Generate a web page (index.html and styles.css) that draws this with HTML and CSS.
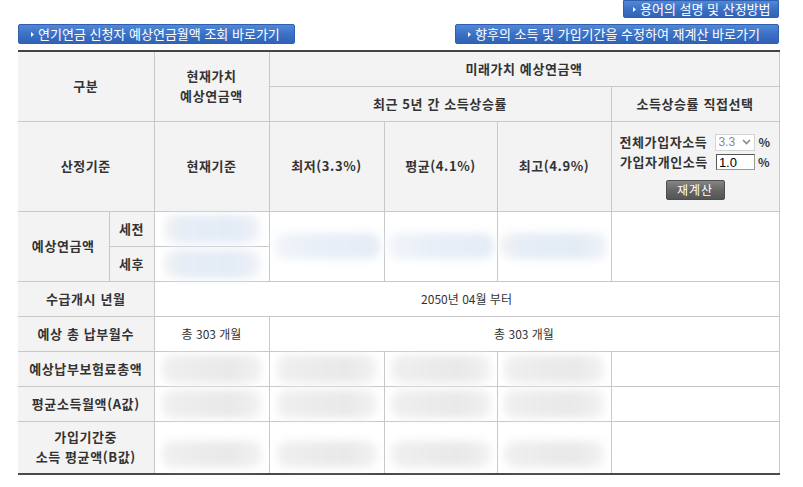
FILE: index.html
```html
<!DOCTYPE html>
<html lang="ko">
<head>
<meta charset="utf-8">
<title>예상연금액 조회</title>
<link rel="stylesheet" href="styles.css">
</head>
<body>
<div class="page">
  <div class="top-row">
    <a class="btn btn-terms" href="#"><svg class="arrow" width="3" height="5" viewBox="0 0 3 5"><path d="M0 0L3 2.5L0 5Z" fill="#fff"/></svg>용어의 설명 및 산정방법</a>
  </div>
  <div class="btn-row">
    <a class="btn btn-left" href="#"><svg class="arrow" width="3" height="5" viewBox="0 0 3 5"><path d="M0 0L3 2.5L0 5Z" fill="#fff"/></svg>연기연금 신청자 예상연금월액 조회 바로가기</a>
    <a class="btn btn-right" href="#"><svg class="arrow" width="3" height="5" viewBox="0 0 3 5"><path d="M0 0L3 2.5L0 5Z" fill="#fff"/></svg>향후의 소득 및 가입기간을 수정하여 재계산 바로가기</a>
  </div>
  <table class="calc">
    <colgroup>
      <col class="c1a"><col class="c1b"><col class="c2"><col class="c3"><col class="c4"><col class="c5"><col class="c6">
    </colgroup>
    <tr class="r-h1">
      <th colspan="2" rowspan="2">구분</th>
      <th rowspan="2">현재가치<br>예상연금액</th>
      <th colspan="4">미래가치 예상연금액</th>
    </tr>
    <tr class="r-h2">
      <th colspan="3">최근 5년 간 소득상승률</th>
      <th>소득상승률 직접선택</th>
    </tr>
    <tr class="r-h3">
      <th colspan="2">산정기준</th>
      <th>현재기준</th>
      <th>최저(3.3%)</th>
      <th>평균(4.1%)</th>
      <th>최고(4.9%)</th>
      <th class="ctrl">
        <div class="ctrl-line">전체가입자소득<span class="select"><span class="sel-val">3.3</span><svg width="9" height="6" viewBox="0 0 9 6"><path d="M1 1L4.5 4.5L8 1" stroke="#8a8a8a" stroke-width="1.6" fill="none"/></svg></span><span class="pct">%</span></div>
        <div class="ctrl-line">가입자개인소득<input class="rate" type="text" value="1.0"><span class="pct">%</span></div>
        <div class="ctrl-line"><button class="recalc" type="button">재계산</button></div>
      </th>
    </tr>
    <tr class="r-std">
      <th rowspan="2">예상연금액</th>
      <th>세전</th>
      <td><span class="blob blue b-small"></span></td>
      <td rowspan="2"><span class="blob blue2 b-wide"></span></td>
      <td rowspan="2"><span class="blob blue2 b-wide"></span></td>
      <td rowspan="2"><span class="blob blue b-wide"></span></td>
      <td rowspan="2"></td>
    </tr>
    <tr class="r-std">
      <th>세후</th>
      <td><span class="blob blue b-small"></span></td>
    </tr>
    <tr class="r-std">
      <th colspan="2">수급개시 년월</th>
      <td colspan="5" class="txt">2050년 04월 부터</td>
      <td></td>
    </tr>
    <tr class="r-std">
      <th colspan="2">예상 총 납부월수</th>
      <td class="txt">총 303 개월</td>
      <td colspan="4" class="txt">총 303 개월</td>
      <td></td>
    </tr>
    <tr class="r-std">
      <th colspan="2">예상납부보험료총액</th>
      <td><span class="blob gray b-gray"></span></td>
      <td><span class="blob gray b-gray"></span></td>
      <td><span class="blob gray b-gray"></span></td>
      <td><span class="blob gray b-gray"></span></td>
      <td></td>
    </tr>
    <tr class="r-std">
      <th colspan="2">평균소득월액(A값)</th>
      <td><span class="blob gray b-gray"></span></td>
      <td><span class="blob gray b-gray"></span></td>
      <td><span class="blob gray b-gray"></span></td>
      <td><span class="blob gray b-gray"></span></td>
      <td></td>
    </tr>
    <tr class="r-last">
      <th colspan="2">가입기간중<br>소득 평균액(B값)</th>
      <td><span class="blob gray b-gray low"></span></td>
      <td><span class="blob gray b-gray low"></span></td>
      <td><span class="blob gray b-gray low"></span></td>
      <td><span class="blob gray b-gray low"></span></td>
      <td></td>
    </tr>
  </table>
</div>
</body>
</html>
```

FILE: styles.css
```css
* { box-sizing: border-box; }
html, body {
  margin: 0;
  padding: 0;
  background: #fff;
}
body {
  font-family: "Noto Sans CJK KR", "Noto Sans", sans-serif;
  color: #333;
  font-size: 12px;
}
.page {
  width: 761px;
  margin-left: 18px;
}
.top-row {
  display: flex;
  justify-content: flex-end;
  height: 18px;
}
.btn-row {
  display: flex;
  justify-content: space-between;
  margin-top: 6px;
  height: 20px;
}
.btn {
  display: flex;
  align-items: center;
  height: 20px;
  border: 1px solid #2f5fae;
  border-radius: 2px;
  background: linear-gradient(#5088d6, #3a6fc4 55%, #3163b7);
  color: #fff;
  font-size: 13px;
  line-height: 18px;
  text-decoration: none;
  white-space: nowrap;
}
.btn .arrow {
  flex: none;
  margin-right: 4px;
}
.btn-terms {
  width: 156px;
  height: 18px;
  padding-left: 9px;
  border-top-left-radius: 0;
  border-top-right-radius: 0;
}
.btn-left {
  width: 277px;
  padding-left: 12px;
}
.btn-right {
  width: 324px;
  padding-left: 12px;
}

.calc {
  width: 761px;
  table-layout: fixed;
  border-collapse: collapse;
  margin-top: 6px;
  border-top: 2px solid #444;
  border-bottom: 2px solid #4a4a4a;
  border-left: hidden;
  border-right: hidden;
}
.c1a { width: 91px; }
.c1b { width: 45px; }
.c2 { width: 115px; }
.c3 { width: 115px; }
.c4 { width: 113px; }
.c5 { width: 114px; }
.c6 { width: 168px; }

.calc th, .calc td {
  border: 1px solid #c8c8c8;
  padding: 0;
  text-align: center;
  vertical-align: middle;
}
.calc th {
  background: #f3f3f3;
  font-size: 13px;
  font-weight: bold;
  color: #333;
  line-height: 20px;
  letter-spacing: 0.6px;
}
.calc td {
  background: #fff;
  font-size: 12px;
  color: #333;
}
.r-h1 { height: 35px; }
.r-h2 { height: 35px; }
.r-h3 { height: 90px; }
.r-std { height: 35px; }
.r-last { height: 53px; }

.ctrl-line {
  display: flex;
  align-items: center;
  justify-content: center;
  height: 20px;
  white-space: nowrap;
  letter-spacing: 0.6px;
}
.ctrl-line:last-child {
  margin-top: 8px;
}
.select {
  display: inline-flex;
  align-items: center;
  justify-content: space-between;
  width: 40px;
  height: 17px;
  margin-left: 8px;
  padding: 0 3px 0 2px;
  border: 1px solid #d3d3d3;
  background: #fff;
  color: #8a8a8a;
  font-family: "Liberation Sans", sans-serif;
  font-size: 12px;
  font-weight: normal;
  letter-spacing: 0;
}
.pct {
  margin-left: 3px;
  font-size: 12px;
}
.rate {
  width: 39px;
  height: 16px;
  margin: 0 0 0 8px;
  padding: 0 2px;
  border: 1px solid #555;
  border-right-color: #999;
  border-bottom-color: #999;
  font-family: "Liberation Sans", sans-serif;
  font-size: 13px;
  color: #000;
  outline: none;
  letter-spacing: 0;
}
.recalc {
  width: 59px;
  height: 20px;
  padding: 0;
  border: 1px solid #4e4e4e;
  border-radius: 2px;
  background: linear-gradient(#858585, #666 50%, #555);
  color: #fff;
  font-family: "Noto Sans CJK KR", sans-serif;
  font-size: 12px;
  line-height: 18px;
  letter-spacing: 1px;
}
.txt {
  font-size: 12px;
}

.blob {
  display: block;
  margin: 0 auto;
  border-radius: 10px;
  filter: blur(4px);
}
.blue {
  background: linear-gradient(to right, #f0f1f3 0%, #e6edf6 22%, #e3ebf5 70%, #eff2f7 100%);
}
.blue2 {
  background: linear-gradient(to right, #f1f5fa 0%, #e9eff8 40%, #e5ecf6 100%);
}
.gray {
  background: linear-gradient(to right, #f0f0f0 0%, #ebebeb 40%, #e9e9e9 70%, #f2f2f2 100%);
}
.b-small { width: 96px; height: 28px; }
.b-wide { width: 106px; height: 26px; }
.b-gray { width: 100px; height: 28px; }
.b-gray.low { margin-top: 14px; height: 26px; }
```
